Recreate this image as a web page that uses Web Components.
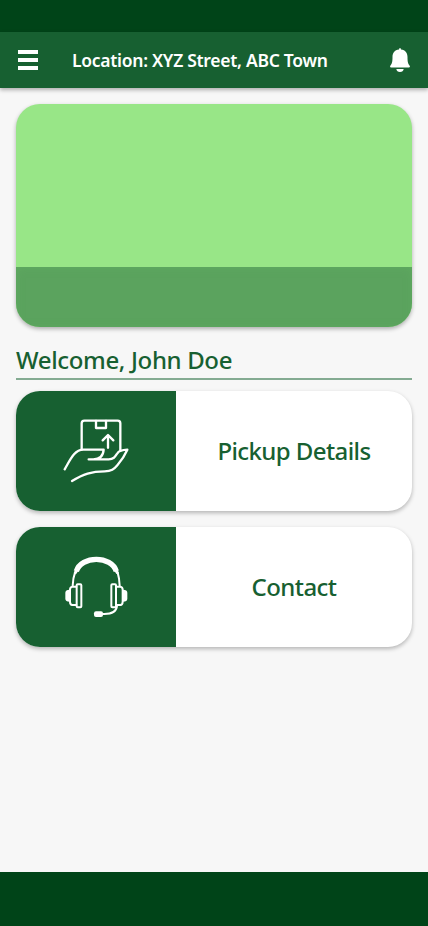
<!DOCTYPE html>
<html lang="en">
<head>
<meta charset="utf-8">
<title>Pickup home</title>
<style>
body { margin: 0; font-family: "Noto Sans", "Open Sans", sans-serif; font-weight: 500; --green: #176031; --dark: #004418; }
</style>
</head>
<body>
<phone-screen>
  <app-bar slot="bar">Location: XYZ Street, ABC Town</app-bar>
  <promo-banner></promo-banner>
  <welcome-title>Welcome, John Doe</welcome-title>
  <action-card>
    <svg slot="icon" width="84" height="80" viewBox="-6 3 252 240" fill="none" stroke="#fff" stroke-width="7" stroke-linecap="round" stroke-linejoin="round">
      <path d="M77 118V40Q77 32 85 32H185Q193 32 193 40V122"/>
      <path d="M120 33V54H150V33M156 113V77M140 91L156 75L172 91"/>
      <path d="M26 178C43 149 55 119 82 119H143Q141 148 112 148H98H158C174 148 178 139 184 130Q190 120 214 119C206 137 196 152 184 166C174 178 166 184 146 184C106 184 82 192 48 213"/>
    </svg>
    Pickup Details
  </action-card>
  <action-card>
    <svg slot="icon" width="84" height="80" viewBox="-6 3 252 240" fill="none" stroke="#fff" stroke-width="6" stroke-linecap="round" stroke-linejoin="round">
      <path d="M61 76C75 28 167 28 181 76" stroke-width="16" stroke-linecap="butt"/>
      <path d="M58 80L67 66M184 80L175 66" stroke-width="9"/>
      <path d="M57 80Q51 96 50 119M185 80Q190 96 191 119"/>
      <rect x="62" y="115" width="14" height="69" rx="3"/>
      <rect x="166" y="115" width="14" height="69" rx="3"/>
      <path d="M61 122H49Q42 123 42 131V167Q42 176 49 177H61M181 122H193Q200 123 200 131V167Q200 176 193 177H181"/>
      <path d="M41 131Q28 131 28 140V158Q28 167 41 167ZM201 131Q214 131 214 140V158Q214 167 201 167Z" fill="#fff" stroke="none"/>
      <path d="M183 179Q181 205 142 204"/>
      <rect x="114" y="196" width="27" height="17" rx="6" fill="#fff" stroke="none"/>
    </svg>
    Contact
  </action-card>
</phone-screen>
<script>
function define(name, markup) {
  customElements.define(name, class extends HTMLElement {
    constructor() {
      super();
      this.attachShadow({ mode: "open" }).innerHTML = markup;
    }
  });
}

define("phone-screen", `
<style>
:host { display: flex; flex-direction: column; height: 926px; background: #f7f7f7; }
.status { height: 32px; background: var(--dark); }
main { flex: 1; display: flex; flex-direction: column; padding: 16px 16px 0; }
.nav { height: 54px; background: var(--dark); }
</style>
<div class="status"></div>
<slot name="bar"></slot>
<main><slot></slot></main>
<div class="nav"></div>`);

define("app-bar", `
<style>
:host { display: flex; align-items: center; height: 56px; box-sizing: border-box; padding: 0 16px 0 18px; background: var(--green); color: #fff; box-shadow: 0 2px 4px rgba(0,0,0,.3); }
.title { flex: 1; margin-left: 34px; font-size: 17.5px; font-weight: 600; line-height: 24px; letter-spacing: -.28px; white-space: nowrap; }
svg { display: block; }
</style>
<svg width="20" height="20" fill="#fff"><path d="M0 0h20v4H0zM0 8h20v4H0zM0 16h20v4H0z"/></svg>
<span class="title"><slot></slot></span>
<svg width="24" height="24" viewBox="0 0 24 24" fill="#fff"><path d="M12 0q1 0 1 1.600C17.500 2.200 19.500 5 19.500 9c0 5 .6 7 2.200 8.800Q22.600 19.500 21 19.500H3Q1.400 19.500 2.300 17.800C3.900 16 4.500 14 4.500 9c0-4 2-6.800 6.500-7.400Q11 0 12 0zM8.300 21h7.400q-.5 3-3.700 3t-3.700-3z"/></svg>`);

define("promo-banner", `
<style>
:host { display: flex; flex-direction: column; justify-content: flex-end; height: 223px; border-radius: 24px; overflow: hidden; background: #98e687; box-shadow: 0 2px 4px rgba(0,0,0,.3); }
.caption { height: 60px; background: #5ba35e; box-shadow: inset 0 1px 8px rgba(100,180,100,.4); }
</style>
<div class="caption"></div>`);

define("welcome-title", `
<style>
:host { display: block; box-sizing: border-box; height: 37px; margin: 16px 0 11px; border-bottom: 2px solid #84ab92; color: var(--green); font-size: 24px; line-height: 33px; letter-spacing: -.35px; white-space: nowrap; }
</style>
<slot></slot>`);

define("action-card", `
<style>
:host { display: flex; height: 120px; margin-bottom: 16px; border-radius: 24px; overflow: hidden; background: #fff; box-shadow: 0 2px 4px rgba(0,0,0,.27); }
.icon { width: 160px; display: flex; align-items: center; justify-content: center; background: var(--green); }
.label { flex: 1; display: flex; align-items: center; justify-content: center; padding-bottom: 2px; color: var(--green); font-size: 24px; letter-spacing: -.58px; white-space: nowrap; }
</style>
<div class="icon"><slot name="icon"></slot></div>
<div class="label"><span><slot></slot></span></div>`);
</script>
</body>
</html>
